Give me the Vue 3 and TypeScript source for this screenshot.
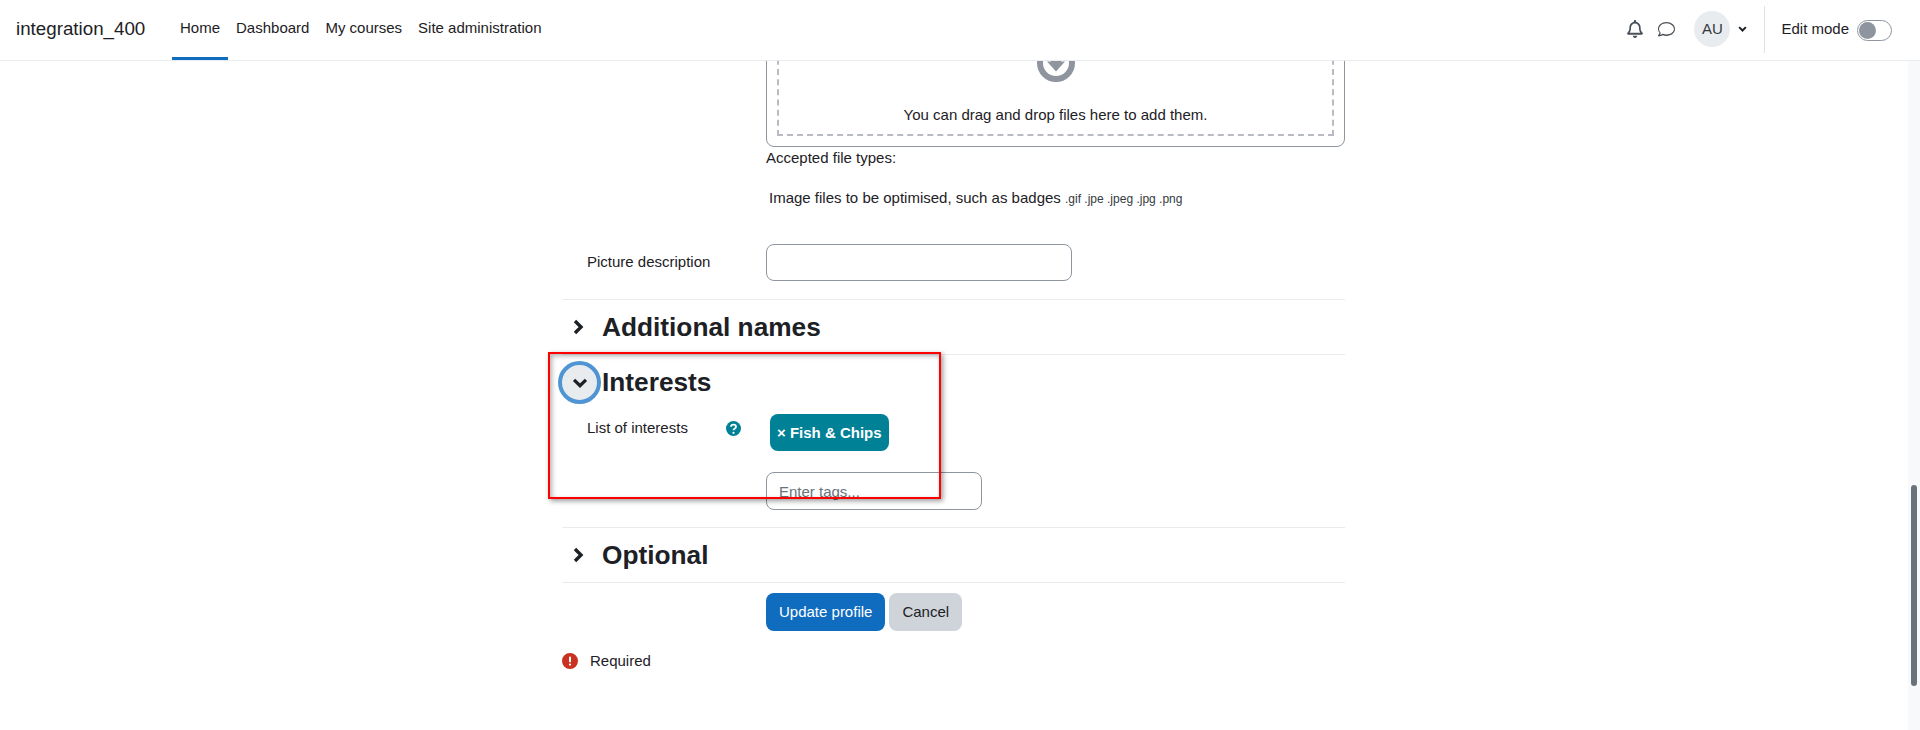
<script setup lang="ts">
const links: string[] = ['Home', 'Dashboard', 'My courses', 'Site administration']
</script>

<template>
  <div class="page">
    <header class="nav">
      <span class="brand">integration_400</span>
      <nav class="links">
        <a v-for="(l, i) in links" :key="l" class="link" :class="{ active: i === 0 }">{{ l }}</a>
      </nav>
      <div class="tools">
        <svg class="bell" viewBox="0 0 448 512" width="16" height="18"><path fill="#495057" d="M224 0c-17.7 0-32 14.3-32 32v19.2C119 66 64 130.600 64 208v18.800c0 47-17.300 92.400-48.500 127.600l-7.400 8.300c-8.400 9.400-10.400 22.900-5.300 34.400S19.400 416 32 416h384c12.600 0 24-7.400 29.200-18.900s3.100-25-5.300-34.400l-7.400-8.300c-31.200-35.200-48.500-80.500-48.500-127.600V208c0-77.400-55-142-128-156.800V32c0-17.700-14.300-32-32-32zm0 96c61.900 0 112 50.100 112 112v18.800c0 47.900 13.900 94.600 39.700 134.600H72.300C98.100 321.400 112 274.700 112 226.800V208c0-61.900 50.100-112 112-112zm64 352H160c0 17 6.700 33.300 18.700 45.300S207 512 224 512s33.300-6.700 45.300-18.700S288 465 288 448z"/></svg>
        <svg class="chat" viewBox="0 0 512 512" width="17" height="17"><path fill="#495057" d="M256 64C125.800 64 32 148.600 32 240c0 37.100 15.100 73.200 43.500 103.300 7 7.400 9.200 18.100 5.700 27.700-6 16.300-14.200 31.200-22.800 44.300 25.400-3.800 49.700-12.700 70.600-25.200 8-4.800 17.800-5.800 26.600-2.700 31.200 11 65.200 16.600 100.400 16.600 130.200 0 224-84.600 224-164S386.200 64 256 64zM0 240C0 125 113.600 32 256 32s256 93 256 208-113.600 208-256 208c-39.400 0-76.800-6.300-110.500-18.100C112 451 66.800 464 24 464c-9.600 0-18.300-5.700-22.100-14.500-3.800-8.800-2-19 4.600-26 18.100-19.300 32.800-43.700 41.800-68.100C17.900 322.100 0 282.400 0 240z"/></svg>
        <span class="avatar">AU</span>
        <svg class="caret" viewBox="0 0 12 8" width="9" height="6"><path d="M1.500 1.500 6 6l4.500-4.500" fill="none" stroke="#1d2125" stroke-width="2.600" /></svg>
        <span class="divider"></span>
        <span class="edit">Edit mode</span>
        <span class="toggle"><span class="knob"></span></span>
      </div>
    </header>
    <div class="body">
      <main class="main">
        <form class="form" @submit.prevent>
          <div class="control-col">
            <div class="fm">
              <div class="drop">
                <svg class="drop-icon" viewBox="0 0 38 38" width="38" height="38">
                  <circle cx="19" cy="19" r="16" fill="#fff" stroke="#8f959e" stroke-width="6" />
                  <path d="M19 27.500 10 17.500h18z" fill="#8f959e" />
                  <rect x="14" y="7" width="10" height="11" fill="#8f959e" />
                </svg>
                <div class="drop-text">You can drag and drop files here to add them.</div>
              </div>
            </div>
            <div class="accepted">Accepted file types:</div>
            <div class="types">Image files to be optimised, such as badges <small>.gif .jpe .jpeg .jpg .png</small></div>
          </div>
          <div class="row desc">
            <label class="label">Picture description</label>
            <input class="input pic" type="text" />
          </div>
          <section class="section">
            <svg class="chev" viewBox="0 0 12 16" width="12" height="16"><path d="M3 2 9 8 3 14" fill="none" stroke="#1d2125" stroke-width="3.400" /></svg>
            <h3 class="heading">Additional names</h3>
          </section>
          <section class="section open">
            <span class="focus"><svg viewBox="0 0 16 12" width="18" height="13"><path d="M2.500 3.500 8 9 13.500 3.500" fill="none" stroke="#1d2125" stroke-width="3" /></svg></span>
            <h3 class="heading">Interests</h3>
          </section>
          <div class="row tags">
            <div class="label tag-label">
              <span>List of interests</span>
              <svg class="help" viewBox="0 0 512 512" width="15" height="15">
                <circle cx="256" cy="256" r="256" fill="#008196" />
                <path d="M170 200c0-48 38-78 88-78 48 0 84 30 84 72 0 36-26 52-52 68-22 14-34 24-34 52" fill="none" stroke="#fff" stroke-width="60" />
                <circle cx="256" cy="402" r="38" fill="#fff" />
              </svg>
            </div>
            <div class="tag-col">
              <span class="tag">× Fish &amp; Chips</span>
              <input class="input tag-input" type="text" placeholder="Enter tags..." />
            </div>
          </div>
          <section class="section">
            <svg class="chev" viewBox="0 0 12 16" width="12" height="16"><path d="M3 2 9 8 3 14" fill="none" stroke="#1d2125" stroke-width="3.400" /></svg>
            <h3 class="heading">Optional</h3>
          </section>
          <div class="actions">
            <button class="btn primary" type="button">Update profile</button>
            <button class="btn secondary" type="button">Cancel</button>
          </div>
          <div class="required">
            <svg viewBox="0 0 512 512" width="16" height="16"><path fill="#ca3120" d="M256 512a256 256 0 1 0 0-512 256 256 0 1 0 0 512zm0-400c17.700 0 32 10.700 32 28v128c0 17.300-14.300 28-32 28s-32-10.700-32-28V140c0-17.300 14.300-28 32-28zm-36 256a36 36 0 1 1 72 0 36 36 0 1 1-72 0z"/></svg>
            <span>Required</span>
          </div>
          <div class="highlight"></div>
        </form>
      </main>
      <aside class="scrollbar"><span class="thumb"></span></aside>
    </div>
  </div>
</template>

<style>
html, body { margin: 0; background: #fff; overflow: hidden; }
</style>

<style scoped>
.page {
  width: 1920px;
  height: 730px;
  display: flex;
  flex-direction: column;
  font-family: "Liberation Sans", Arial, sans-serif;
  font-size: 15px;
  line-height: 22.5px;
  color: #1d2125;
  overflow: hidden;
}
.nav {
  height: 60px;
  flex: none;
  display: flex;
  align-items: center;
  padding: 0 28px 0 16px;
  border-bottom: 1px solid #e9ecef;
  box-sizing: content-box;
}
.brand { font-size: 18.750px; width: 156px; padding-bottom: 2px; }
.links { display: flex; height: 60px; align-items: stretch; }
.link {
  display: flex;
  align-items: center;
  padding: 0 8px;
  border-bottom: 3px solid transparent;
  box-sizing: border-box;
  color: #1d2125;
}
.link.active { border-bottom-color: #0f6cbf; }
.tools { margin-left: auto; display: flex; align-items: center; height: 60px; box-sizing: border-box; padding-bottom: 2px; }
.bell { margin-right: 15px; }
.chat { margin-right: 19px; }
.avatar {
  width: 36px; height: 36px; border-radius: 50%;
  background: #e9ecef;
  display: flex; align-items: center; justify-content: center;
  color: #343a40;
}
.caret { margin-left: 8px; margin-right: 17px; }
.divider { width: 1px; height: 47px; background: #dee2e6; margin-right: 16px; }
.edit { margin-right: 8px; }
.toggle {
  width: 35px; height: 21px; box-sizing: border-box;
  border: 1px solid #8f959e; border-radius: 11px; background: #fff;
  display: flex; align-items: center; padding-left: 1px;
  margin-top: 3px;
}
.knob { width: 17px; height: 17px; border-radius: 50%; background: #8f959e; }
.body { flex: 1; min-height: 0; display: flex; }
.main { flex: 1; min-width: 0; overflow: hidden; display: flex; justify-content: center; }
.form { width: 783px; margin-right: 1px; flex: none; position: relative; }
.control-col { margin-left: 204px; }
.fm {
  margin-top: -54px;
  height: 140px;
  box-sizing: border-box;
  border: 1px solid #8f959e;
  border-radius: 8px;
  padding: 0 10px 10px;
  display: flex;
}
.drop {
  flex: 1;
  border: 2px dashed #b8bcc2;
  border-top: 0;
  display: flex;
  flex-direction: column;
  align-items: center;
  padding-top: 36px;
  box-sizing: border-box;
}
.drop-icon { flex: none; }
.drop-text { margin-top: 22px; }
.accepted { height: 22px; }
.types { margin-top: 18px; padding-left: 3px; }
.types small { font-size: 12px; color: #343a40; }
.row { display: flex; }
.label { width: 204px; flex: none; box-sizing: border-box; padding-left: 25px; }
.desc { margin-top: 33px; align-items: center; padding-bottom: 18px; border-bottom: 1px solid #e9ecef; }
.input {
  box-sizing: border-box;
  border: 1px solid #8f959e;
  border-radius: 8px;
  height: 38px;
  font: inherit;
  padding: 2px 12px 0;
  background: #fff;
}
.pic { width: 306px; height: 37px; }
.section { display: flex; align-items: center; height: 54px; border-bottom: 1px solid #e9ecef; padding-left: 10px; }
.chev { flex: none; margin-right: 18px; }
.heading { margin: 0; font-size: 26.250px; line-height: 32px; font-weight: 700; color: #1d2125; }
.section.open { border-bottom: 0; padding-left: 0; }
.focus {
  box-sizing: border-box;
  width: 43px; height: 43px; margin-left: -4px; margin-right: 1px; margin-top: 1px;
  border-radius: 50%; background: #e9ecef;
  border: 4px solid #5095d3;
  display: flex; align-items: center; justify-content: center;
  flex: none;
}
.tags { margin-top: 5px; padding-bottom: 17px; border-bottom: 1px solid #e9ecef; }
.tag-label { display: flex; justify-content: space-between; padding-right: 25px; align-items: flex-start; padding-top: 3px; }
.tag-label .help { margin-top: 4px; }
.tag-col { display: flex; flex-direction: column; align-items: flex-start; gap: 21px; }
.tag {
  margin-left: 4px;
  height: 37px; box-sizing: border-box;
  background: #008196; color: #fff;
  font-weight: 700;
  padding: 2px 7px 0;
  border-radius: 8px;
  display: flex; align-items: center;
}
.tag-input { width: 216px; }
.tag-input::placeholder { color: #6a737b; opacity: 1; }
.actions { display: flex; gap: 4px; margin-left: 204px; margin-top: 10px; }
.btn { height: 38px; font: inherit; border: 0; border-radius: 8px; padding: 2px 13px 0; }
.primary { background: #0f6cbf; color: #fff; }
.secondary { background: #ced4da; color: #1d2125; }
.required { display: flex; align-items: center; gap: 12px; margin-top: 19px; }
.highlight {
  position: absolute;
  left: -14px; top: 291px;
  width: 393px; height: 147px;
  box-sizing: border-box;
  border: 2px solid #f00;
  box-shadow: 2px 2px 5px rgba(0,0,0,.4), inset 2px 2px 5px rgba(0,0,0,.3);
  pointer-events: none;
}
.scrollbar { width: 12px; flex: none; background: #f8f9fa; display: flex; justify-content: center; }
.thumb { width: 6px; height: 201px; margin-top: 424px; border-radius: 3px; background: #6a737b; }
</style>
